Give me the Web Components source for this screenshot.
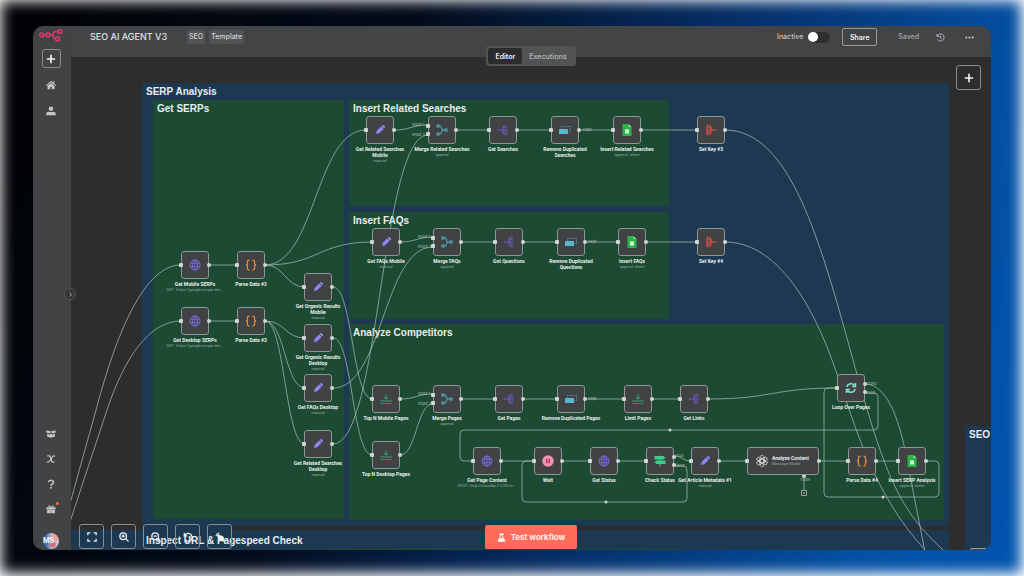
<!DOCTYPE html>
<html lang="en">
<head>
<meta charset="utf-8">
<meta name="viewport" content="width=device-width, initial-scale=1">
<title>SEO AI AGENT V3</title>
<style>
  html, body { margin: 0; height: 100%; background: #fff; overflow: hidden; }
  body { font-family: Inter, "Liberation Sans", sans-serif; color: #e6e6e6; }
</style>
</head>
<body>
<workflow-app></workflow-app>

<script>
const ICONS = {
  pen: ['#8f87f7', '<g transform="rotate(45 12 12)"><path d="M8.500 5.500h7V18L12 23l-3.500-5z"/><path d="M8.500 4.300V2.500Q8.500 0 11 0h2q2.500 0 2.500 2.500v1.800z"/></g>'],
  merge: ['#4fb0c0', '<g fill="none" stroke="currentColor" stroke-width="2"><rect x="2" y="2" width="4" height="4"/><rect x="2" y="18" width="4" height="4"/><rect x="18" y="10" width="4" height="4"/><path d="M6 4h2q3 0 3 4t3 4h4M6 20h2q3 0 3-4t3-4"/></g>'],
  split: ['#7259d0', '<g fill="none" stroke="currentColor" stroke-width="2"><path d="M1 12h20M20 3h-4q-4 0-4 4v10q0 4 4 4h4M12 7.500h9M12 16.500h9"/></g>'],
  agg: ['#ee5548', '<g fill="none" stroke="currentColor" stroke-width="2"><path d="M3 12h20M4 3h3q5 0 5 4v10q0 4-5 4H4M3 7.500h9M3 16.500h9M4 3v18"/></g>'],
  dedupe: ['#54b8cf', '<rect x="0" y="10" width="18" height="10" rx="1"/><path d="M5 9V5h18v10h-4" fill="none" stroke="currentColor" stroke-width="1.500" stroke-dasharray="2 1.500"/>'],
  sheet: ['#28b446', '<path d="M3 0h12l6 6v18H3z"/><path d="M15 0v6h6z" fill="#8fdc9c"/><path d="M8 11h8v8H8z" fill="#e9fbe9"/><path d="M8 15h8M12 11v8" stroke="#8fdc9c"/>'],
  code: ['#ef9035', '<path d="M9 2H8Q5 2 5 5v4q0 3-3 3 3 0 3 3v4q0 3 3 3h1M15 2h1q3 0 3 3v4q0 3 3 3-3 0-3 3v4q0 3-3 3h-1" fill="none" stroke="currentColor" stroke-width="2.500"/>'],
  globe: ['#7468d8', '<g fill="none" stroke="currentColor" stroke-width="2"><circle cx="12" cy="12" r="10"/><ellipse cx="12" cy="12" rx="5" ry="10"/><path d="M2.500 8.500h19M2.500 15.500h19M12 2v20"/></g>'],
  limit: ['#31a978', '<path d="M12 2v10M7.500 8l4.500 4.500L16.500 8M1 16h22" fill="none" stroke="currentColor" stroke-width="2"/><path d="M1 21h22" stroke="currentColor" stroke-width="2" stroke-dasharray="3 1.700"/>'],
  wait: ['#f590ae', '<circle cx="12" cy="12" r="11.500"/><path d="M9.500 7.500v9M14.500 7.500v9" stroke="#9a4060" stroke-width="3"/>'],
  sign: ['#3ccf8a', '<path d="M1 2h18l4 3.500L19 9H1zM23 11H5l-4 3.500L5 18h18z"/><path d="M11 1h2v22h-2z"/>'],
  loop: ['#7fe3cf', '<path d="M3.500 10A9 9 0 0 1 19 6.500M20.500 14A9 9 0 0 1 5 17.500M21 2v7h-7M3 22v-7h7" fill="none" stroke="currentColor" stroke-width="3"/>'],
  ai: ['#d8d8d8', '<g fill="none" stroke="currentColor" stroke-width="1.700">' + [0, 60, 120, 180, 240, 300].map(a => `<path transform="rotate(${a} 12 12)" d="M12 7.200 7.800 9.600V4.800a4 4 0 0 1 7.500-2"/><path transform="rotate(${a} 12 12)" d="M7.800 4.800 12 7.200l4.200 2.400v4.800"/>`).join('') + '</g>'],
  plus: ['#f4f4f4', '<path d="M12 2v20M2 12h20" fill="none" stroke="currentColor" stroke-width="4"/>'],
  home: ['#c3c4c6', '<path d="M12 2 0 12.500l1.600 1.800L12 5.200l10.400 9.100L24 12.500l-4-3.500V3h-3v3.300z"/><path d="M12 7l-8.500 7.500V22H10v-5h4v5h6.500v-7.500z"/>'],
  user: ['#c3c4c6', '<circle cx="12" cy="6.500" r="5.500"/><path d="M.5 22v-3q0-5.500 5.500-5.500 6 2 12 0 5.500 0 5.500 5.500v3z"/>'],
  box: ['#c3c4c6', '<path d="M2 3l10 3 10-3 2 5-8 3-4-4-4 4-8-3zM2.500 11.500 9 14l3-4 3 4 6.500-2.500V18L12 21l-9.500-3z"/>'],
  vars: ['#c3c4c6', '<path d="M3 4.500h5q2 0 3 3l2.500 9q.8 3 3 3h4" fill="none" stroke="currentColor" stroke-width="3.500"/><path d="M22 5.500q-4-2.500-7 2L9 16.500q-3 4.500-7 2" fill="none" stroke="currentColor" stroke-width="2.500"/>'],
  help: ['#c3c4c6', '<path d="M6 7.500Q7 3 12 3t6 5q0 3-3.500 4.500-2.500 1-2.500 3.500" fill="none" stroke="currentColor" stroke-width="4"/><circle cx="12" cy="21" r="2.400"/>'],
  gift: ['#c3c4c6', '<path d="M1 8h22v5H1zM2.500 14.500H10V22H2.500zM14 14.500h7.500V22H14zM10.500 9h3v13h-3z"/><path d="M12 8Q5 8 6 4.500T12 8q5-7 6-3.500T12 8" fill="none" stroke="currentColor" stroke-width="2"/>'],
  fit: ['#f0f2f4', '<path d="M2 8V2h6M16 2h6v6M22 16v6h-6M8 22H2v-6" fill="none" stroke="currentColor" stroke-width="3"/>'],
  zoomin: ['#f0f2f4', '<path d="M16 16l7 7M10 6v8M6 10h8" stroke="currentColor" stroke-width="3"/><circle cx="10" cy="10" r="8" fill="none" stroke="currentColor" stroke-width="3"/>'],
  zoomout: ['#f0f2f4', '<path d="M16 16l7 7M6 10h8" stroke="currentColor" stroke-width="3"/><circle cx="10" cy="10" r="8" fill="none" stroke="currentColor" stroke-width="3"/>'],
  undo: ['#f0f2f4', '<path d="M3 2v7h7M3.500 9A9.500 9.500 0 1 1 5 19" fill="none" stroke="currentColor" stroke-width="3"/>'],
  tidy: ['#f0f2f4', '<path d="M2 2l11 11M9 1v8H1M11 8l8 3 4 12-12-4-3-8z" stroke="currentColor" stroke-width="1.500"/>'],
  history: ['#b9babc', '<path d="M2.500 2.500v6.500H9M3 9a9.500 9.500 0 1 1 1 8M12 7v6l4 2" fill="none" stroke="currentColor" stroke-width="2.400"/>'],
  dots: ['#d0d0d0', '<circle cx="3.500" cy="12" r="2.700"/><circle cx="12" cy="12" r="2.700"/><circle cx="20.500" cy="12" r="2.700"/>'],
  flask: ['#fff', '<path d="M6 1h12v3h-1.500v7L22 20q1 3-2 3H4q-3 0-2-3l5.500-9V4H6z"/><path d="M10 5h4v7l1.500 2.500h-7L10 12z" fill="#ff6d5a"/>'],
  chevron: ['#d0d0d0', '<path d="M8 3l9 9-9 9" fill="none" stroke="currentColor" stroke-width="4"/>']
};

const define = (name, css, html) => customElements.define(name, class extends HTMLElement {
  connectedCallback() {
    if (this.shadowRoot) return;
    const root = this.attachShadow({ mode: 'open' });
    root.innerHTML = `<style>${css}</style>` + (typeof html === 'function' ? html(this) : html);
  }
});

define('flow-icon', `
  :host { display: block; flex: none; width: var(--size, 12px); height: var(--size, 12px); }
  svg { display: block; width: 100%; height: 100%; overflow: visible; }
`, el => {
  const [color, shape] = ICONS[el.getAttribute('name')];
  return `<svg viewBox="0 0 24 24" fill="currentColor" style="color:${color}" aria-hidden="true">${shape}</svg>`;
});

define('icon-button', `
  :host { display: block; --size: 10px; }
  button { display: grid; place-items: center; width: var(--box, 25px); height: var(--box, 25px); padding: 0;
    border: 1px solid #8a8d90; border-radius: 3px; background: transparent; }
  :host([bare]) button { border-color: transparent; }
`, el => `<button type="button" aria-label="${el.getAttribute('label')}"><flow-icon name="${el.getAttribute('icon')}"></flow-icon></button>`);

define('sticky-note', `
  :host { position: absolute; box-sizing: border-box; padding: 2px 4px; background: #1d3952; }
  :host([tone="green"]) { background: #1c4a32; }
  h2 { margin: 0; font: 700 10px/13px "Liberation Sans", Arial, sans-serif; color: #e8eef2; white-space: nowrap; }
`, '<h2><slot></slot></h2>');

define('flow-node', `
  :host { position: absolute; width: 28px; --size: 12px; }
  :host([wide]) { width: 72px; }
  .box { position: relative; display: flex; align-items: center; justify-content: center; gap: 4px; box-sizing: border-box;
    height: 28px; border: 1px solid #8f9693; border-radius: 3px; background: #414244; }
  :host([wide]) .box { justify-content: flex-start; padding-left: 8px; }
  .text { display: flex; flex-direction: column; align-items: center; width: 0; margin: 2px auto 0;
    font: 5px/6px Roboto, "Liberation Sans", sans-serif; white-space: nowrap; text-align: center; }
  .box .text { width: auto; margin: 0; align-items: flex-start; }
  b { font-weight: 700; color: #e9efec; }
  small { font-size: 4px; line-height: 6px; color: #98a8a0; }
  i { position: absolute; width: 4px; height: 4px; border-radius: 50%; background: #cfd6d3; transform: translateY(-50%); }
  .in { left: -3px; border-radius: 1px; }
  .out { right: -3px; }
`, el => {
  const a = n => el.getAttribute(n) || '';
  const spots = n => (a(n) || '50').split(' ').map(p => `<i class="${n}" style="top:${p}%"></i>`).join('');
  const text = `<span class="text"><b>${a('label').replace('|', '<br>')}</b>${a('sub') ? `<small>${a('sub')}</small>` : ''}</span>`;
  const wide = el.hasAttribute('wide');
  return `<div class="box"><flow-icon name="${a('icon')}"></flow-icon>${wide ? text : ''}${spots('in')}${spots('out')}</div>${wide ? '' : text}`;
});

/* x, y give the centre of each node on the board. */
const NODES = [
  ['pen', 380, 130, 'Get Related Searches|Mobile', 'manual'],
  ['merge', 442, 130, 'Merge Related Searches', 'append', '34 66'],
  ['split', 503, 130, 'Get Searches'],
  ['dedupe', 565, 130, 'Remove Duplicated|Searches'],
  ['sheet', 627, 130, 'Insert Related Searches', 'append: sheet'],
  ['agg', 711, 130, 'Set Key #3'],
  ['pen', 386, 242, 'Get FAQs Mobile', 'manual'],
  ['merge', 447, 242, 'Merge FAQs', 'append', '34 66'],
  ['split', 509, 242, 'Get Questions'],
  ['dedupe', 571, 242, 'Remove Duplicated|Questions'],
  ['sheet', 632, 242, 'Insert FAQs', 'append: sheet'],
  ['agg', 711, 242, 'Set Key #4'],
  ['globe', 195, 265, 'Get Mobile SERPs', 'GET: https://google.serper.dev...'],
  ['code', 251, 265, 'Parse Data #2'],
  ['globe', 195, 321, 'Get Desktop SERPs', 'GET: https://google.serper.dev...'],
  ['code', 251, 321, 'Parse Data #3'],
  ['pen', 318, 287, 'Get Organic Results|Mobile', 'manual'],
  ['pen', 318, 338, 'Get Organic Results|Desktop', 'manual'],
  ['pen', 318, 388, 'Get FAQs Desktop', 'manual'],
  ['pen', 318, 444, 'Get Related Searches|Desktop', 'manual'],
  ['limit', 386, 399, 'Top N Mobile Pages'],
  ['limit', 386, 455, 'Top N Desktop Pages'],
  ['merge', 447, 399, 'Merge Pages', 'append', '34 66'],
  ['split', 509, 399, 'Get Pages'],
  ['dedupe', 571, 399, 'Remove Duplicated Pages'],
  ['limit', 638, 399, 'Limit Pages'],
  ['split', 694, 399, 'Get Links'],
  ['loop', 851, 388, 'Loop Over Pages', '', '50', '34 66'],
  ['globe', 487, 461, 'Get Page Content', 'POST: http://crawl4ai:11235/cr...'],
  ['wait', 548, 461, 'Wait'],
  ['globe', 604, 461, 'Get Status'],
  ['sign', 660, 461, 'Check Status', '', '50', '34 66'],
  ['pen', 705, 461, 'Get Article Metadata #1', 'manual'],
  ['ai', 783, 461, 'Analyze Content', 'Message Model'],
  ['code', 862, 461, 'Parse Data #4'],
  ['sheet', 912, 461, 'Insert SERP Analysis', 'append: sheet']
];

const NOTES = [
  [142, 83, 807, 441, 'SERP Analysis', ''],
  [153, 100, 191, 419, 'Get SERPs', 'green'],
  [349, 100, 320, 106, 'Insert Related Searches', 'green'],
  [349, 212, 320, 107, 'Insert FAQs', 'green'],
  [349, 324, 595, 196, 'Analyze Competitors', 'green'],
  [142, 524, 90, 6, '', ''],
  [142, 520, 807, 6, '', ''],
  [60, 530, 889, 40, '', ''],
  [965, 426, 60, 150, 'SEO', ''],
  [300, 549, 380, 20, '', 'green']
];

const curve = (x1, y1, x2, y2) => { const m = (x1 + x2) / 2; return `M${x1} ${y1}C${m} ${y1} ${m} ${y2} ${x2} ${y2}`; };
const WIRES = [
  'M66 518L96 410C112 350 140 265 181 265', 'M66 534L107 410C125 356 150 321 181 321',
  curve(209, 265, 237, 265), curve(209, 321, 237, 321),
  curve(265, 265, 366, 130), curve(265, 265, 372, 242), curve(265, 265, 305, 287),
  curve(265, 321, 305, 338), curve(265, 321, 305, 388), curve(265, 321, 305, 444),
  curve(333, 287, 372, 399), curve(333, 338, 372, 455),
  curve(333, 388, 433, 247), curve(333, 444, 428, 135),
  curve(394, 130, 428, 125), 'M456 130H697', curve(400, 242, 433, 237), 'M461 242H697',
  'M725 130C790 130 820 240 853 360S900 510 943 550L960 562', 'M725 242C775 242 810 300 832 360S870 490 925 550L940 566',
  'M865 384C890 384 901 430 906 455L925 552',
  curve(400, 399, 433, 394), curve(400, 455, 433, 404), 'M461 399H680', curve(708, 399, 837, 388),
  'M865 393H874Q878 393 878 397V426Q878 430 874 430H464Q460 430 460 434V457Q460 461 464 461H473',
  'M501 461H646', curve(674, 456, 691, 461),
  'M674 466H683Q687 466 687 470V498Q687 502 683 502H526Q522 502 522 498V465Q522 461 526 461H534',
  'M719 461H898', 'M926 461H935Q939 461 939 465V493Q939 497 935 497H828Q824 497 824 493V392Q824 388 828 388H837',
  'M804 475V491'
];
const PORTS = [
  [412, 125, 'Input 1'], [412, 135, 'Input 2'], [418, 237, 'Input 1'], [418, 247, 'Input 2'], [418, 394, 'Input 1'], [418, 404, 'Input 2'],
  [583, 130, 'Kept'], [588, 242, 'Kept'], [588, 399, 'Kept'], [867, 384, 'done'], [867, 393, 'loop'],
  [676, 456, 'true'], [676, 466, 'false'], [800, 480, 'Tools']
];

define('flow-canvas', `
  :host { display: block; position: relative; overflow: hidden; background: #2d2d2d; }
  .board { position: absolute; left: 0; top: 0; transform: translate(-71px, -57px); }
  svg { position: absolute; left: 0; top: 0; width: 1px; height: 1px; overflow: visible; }
  .port { position: absolute; font-size: 4px; line-height: 4px; color: #b4bfba; transform: translateY(-50%); white-space: nowrap; }
  .overlay { position: absolute; }
  .add { top: 8px; right: 10px; }
  .tools { left: 8px; bottom: 1px; display: flex; gap: 7px; }
  .run { left: 0; right: 0; bottom: 1px; display: flex; justify-content: center; pointer-events: none; }
  .run button { display: flex; align-items: center; justify-content: center; gap: 5px; height: 24px; padding: 0 12px; border: 0; border-radius: 2px;
    background: #ff6d5a; color: #fff; font: 600 8px Inter, sans-serif; white-space: nowrap; --size: 9px; }
`, () => `
  <div class="board">
    ${NOTES.map(([x, y, w, h, t, tone]) => `<sticky-note tone="${tone}" style="left:${x}px;top:${y}px;width:${w}px;height:${h}px">${t}</sticky-note>`).join('')}
    <sticky-note style="left:142px;top:532px;background:none">Inspect URL &amp; Pagespeed Check</sticky-note>
    <svg aria-hidden="true"><g fill="none" stroke="#a7bab4" stroke-opacity=".75">${WIRES.map(d => `<path d="${d}"/>`).join('')}</g>
      <g fill="#cfd6d3"><circle cx="670" cy="430" r="1.500"/><circle cx="606" cy="502" r="1.500"/><circle cx="883" cy="497" r="1.500"/><circle cx="804" cy="476" r="2"/></g>
      <path d="M801.500 490.500h5v5h-5zM804 492v2M803 493h2" fill="#2d2d2d" stroke="#98a8a0"/>
      <path d="M971 551v-2.500h16v2.500" fill="#414244" stroke="#a09a8c"/></svg>
    ${PORTS.map(([x, y, t]) => `<span class="port" style="left:${x}px;top:${y}px">${t}</span>`).join('')}
    ${NODES.map(([icon, x, y, label, sub = '', inn = '', out = '']) => {
      const wide = icon === 'ai';
      return `<flow-node ${wide ? 'wide' : ''} icon="${icon}" label="${label}" sub="${sub}" in="${inn}" out="${out}" style="left:${x - (wide ? 36 : 14)}px;top:${y - 14}px"></flow-node>`;
    }).join('')}
  </div>
  <icon-button class="overlay add" icon="plus" label="Add node"></icon-button>
  <div class="overlay run"><button type="button"><flow-icon name="flask"></flow-icon>Test workflow</button></div>
  <div class="overlay tools">
    <icon-button icon="fit" label="Fit view"></icon-button>
    <icon-button icon="zoomin" label="Zoom in"></icon-button>
    <icon-button icon="zoomout" label="Zoom out"></icon-button>
    <icon-button icon="undo" label="Reset zoom"></icon-button>
    <icon-button icon="tidy" label="Tidy up"></icon-button>
  </div>`);

define('side-bar', `
  :host { display: flex; flex-direction: column; align-items: center; justify-content: space-between; box-sizing: border-box;
    padding: 3px 2px 1px 0; background: #424345; }
  .logo { width: 24px; height: 13px; display: block; }
  nav { display: flex; flex-direction: column; align-items: center; --box: 19px; gap: 7px; }
  .lower { gap: 6px; }
  .spot { position: relative; }
  .spot::after { content: ""; position: absolute; right: 2px; top: 3px; width: 3px; height: 3px; border-radius: 50%; background: #ff6d3a; }
  .avatar { width: 16px; height: 16px; margin-top: 9px; border-radius: 50%; font-size: 7px; line-height: 16px; font-weight: 600; color: #fff;
    background: radial-gradient(circle at 75% 25%, #e9a0a6 0 20%, transparent 35%), radial-gradient(circle at 60% 70%, #d96a74 0 15%, transparent 30%), linear-gradient(90deg, #3b6bb5 20%, #c8d3ea 60%); }
`, `
  <nav aria-label="Main">
    <svg class="logo" viewBox="0 0 24 13" fill="none" stroke="#e0386b" stroke-width="1.500" role="img" aria-label="n8n"><circle cx="2.700" cy="6" r="1.900"/><circle cx="9" cy="6" r="1.900"/><circle cx="21" cy="2.500" r="1.900"/><circle cx="18.500" cy="10" r="1.900"/><path d="M4.600 6h2.500M11 6h1.500q1.800 0 2-1.700.3-1.800 2-1.800h2.600M12.500 6q1.700 0 2 2 .2 2 2 2"/></svg>
    <icon-button icon="plus" label="Create"></icon-button>
    <icon-button bare icon="home" label="Home"></icon-button>
    <icon-button bare icon="user" label="Personal"></icon-button>
  </nav>
  <nav class="lower" aria-label="More">
    <icon-button bare icon="box" label="Templates"></icon-button>
    <icon-button bare icon="vars" label="Variables"></icon-button>
    <icon-button bare icon="help" label="Help"></icon-button>
    <div class="spot"><icon-button bare icon="gift" label="What's new"></icon-button></div>
    <span class="avatar">MS</span>
  </nav>`);

define('top-bar', `
  :host { display: flex; align-items: center; box-sizing: border-box; height: 31px; padding: 0 16px 9px 19px; background: #424446; }
  h1 { margin: 0 20px 0 0; font-size: 9px; line-height: 14px; font-weight: 500; color: #e2e3e4; white-space: nowrap; }
  .tag { margin-right: 4px; padding: 0 2px; border-radius: 2px; background: #515355; font-size: 7px; line-height: 14px; font-weight: 500; color: #d2d3d4; }
  .right { display: flex; align-items: center; margin-left: auto; font-size: 7px; line-height: 14px; color: #c6c7c8; white-space: nowrap; }
  label { display: flex; align-items: center; gap: 5px; font-weight: 500; }
  input { appearance: none; width: 22px; height: 11px; margin: 0 12px 0 0; border-radius: 6px; background: #2e2f30; }
  input::before { content: ""; display: block; width: 10px; height: 10px; border-radius: 50%; background: #fff; }
  .share { width: 35px; height: 18px; padding: 0; border: 1px solid #97999b; border-radius: 2px; background: transparent; color: #eee; font: 600 7px Inter, sans-serif; }
  .saved { margin: 0 11px 0 21px; color: #a5a7a8; font-weight: 500; }
  icon-button { --box: 20px; --size: 9px; margin-right: 9px; }
  icon-button:last-child { margin-right: -4px; }
`, `
  <h1>SEO AI AGENT V3</h1><span class="tag">SEO</span><span class="tag">Template</span>
  <div class="right">
    <label>Inactive <input type="checkbox" role="switch"></label>
    <button class="share" type="button">Share</button>
    <span class="saved">Saved</span>
    <icon-button bare icon="history" label="History"></icon-button>
    <icon-button bare icon="dots" label="More actions"></icon-button>
  </div>`);

define('view-tabs', `
  :host { display: flex; box-sizing: border-box; padding: 2px; border-radius: 3px; background: #525354; }
  button { height: 16px; padding: 0 7px; border: 0; border-radius: 2px; background: transparent; color: #b0b2b3; font: 600 7px Inter, sans-serif; }
  button[aria-selected="true"] { background: #2b2c2d; color: #f0f0f0; }
`, '<button type="button" role="tab" aria-selected="true">Editor</button><button type="button" role="tab" aria-selected="false">Executions</button>');

define('workflow-app', `
  :host { position: relative; display: flex; box-sizing: border-box; height: 100vh; padding: 26px 33px 26px 33px; overflow: hidden; }
  .glow { position: absolute; inset: 1px 3px 3px 1px; filter: blur(7px);
    background: linear-gradient(108deg, #010306 5%, #030b1a 35%, #06306a 62%, #0350a4 86%, #0054b0); }
  .window { position: relative; flex: 1; min-width: 0; display: grid; grid-template: auto 1fr / 38px 1fr; border-radius: 10px; overflow: hidden; }
  side-bar { grid-row: 1 / 3; }
  .tabs { position: absolute; top: 20px; left: 38px; right: 0; display: flex; justify-content: center; pointer-events: none; }
  .expand { position: absolute; left: 31px; top: 262px; display: grid; place-items: center; width: 12px; height: 12px; padding: 0;
    border: 1px solid #555; border-radius: 50%; background: #353637; --size: 5px; }
`, `
  <div class="glow"></div>
  <main class="window">
    <side-bar></side-bar>
    <top-bar></top-bar>
    <flow-canvas></flow-canvas>
    <div class="tabs"><view-tabs role="tablist"></view-tabs></div>
    <button class="expand" type="button" aria-label="Expand sidebar"><flow-icon name="chevron"></flow-icon></button>
  </main>`);
</script>
</body>
</html>
